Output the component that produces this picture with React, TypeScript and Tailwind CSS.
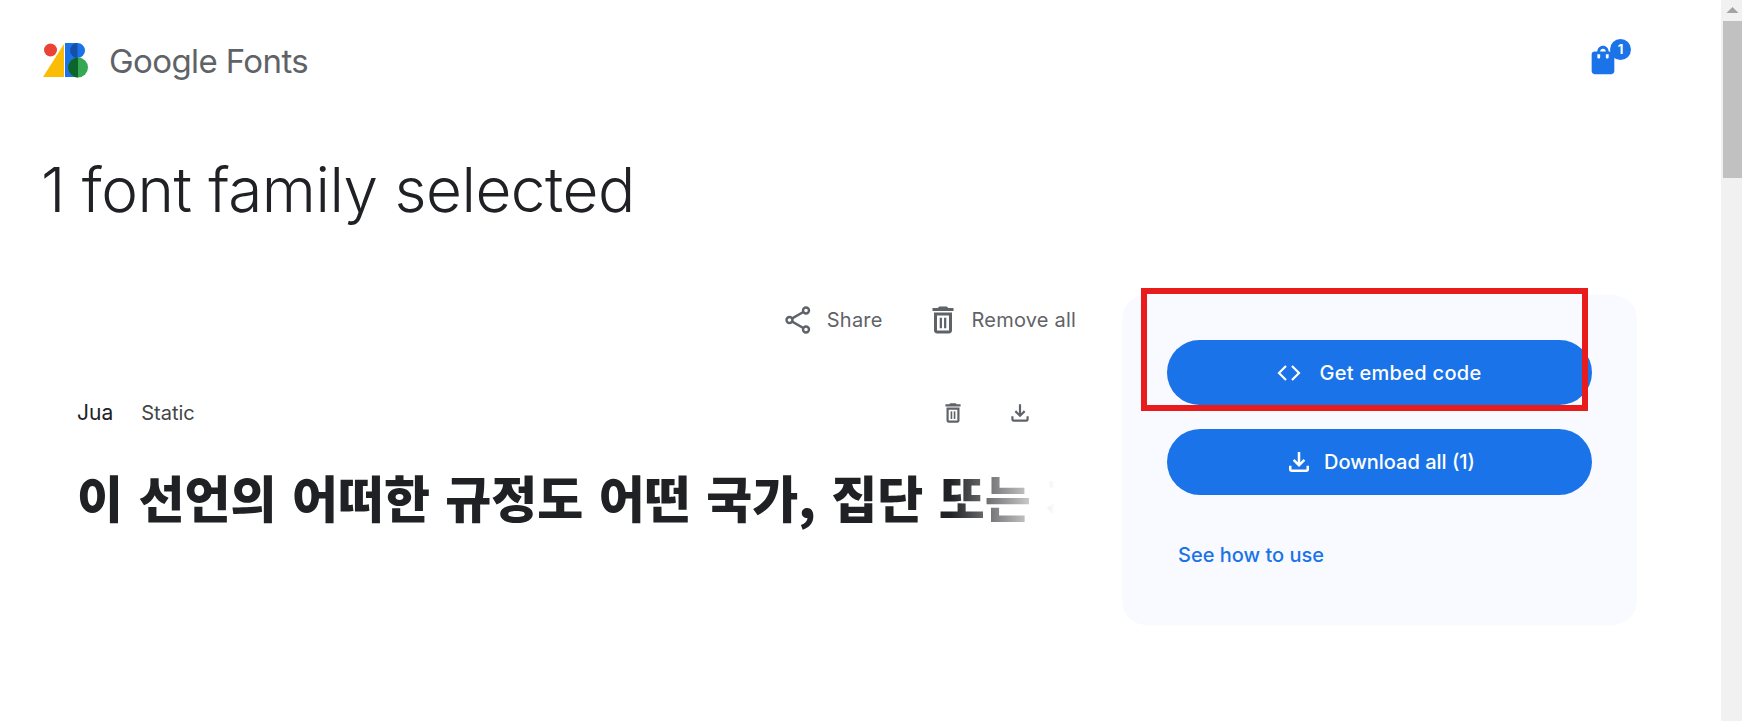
const SANS = "font-['Inter','Noto_Sans',sans-serif]";

function TrashIcon({ className }: { className: string }) {
  return (
    <svg viewBox="0 0 24 24" className={className} fill="currentColor">
      <path d="M6 19c0 1.1.9 2 2 2h8c1.1 0 2-.9 2-2V7H6v12zM8 9h8v10H8V9zm7.5-5l-1-1h-5l-1 1H5v2h14V4z" />
      <rect x="9.8" y="10.5" width="1.5" height="7" />
      <rect x="12.7" y="10.5" width="1.5" height="7" />
    </svg>
  );
}

function DownloadIcon({ className }: { className: string }) {
  return (
    <svg viewBox="0 0 24 24" className={className} fill="currentColor">
      <path d="M12 16l-5-5 1.4-1.45 2.6 2.6V4h2v8.15l2.6-2.6L17 11l-5 5zM6 20c-.55 0-1.02-.2-1.41-.59C4.2 19.02 4 18.55 4 18v-3h2v3h12v-3h2v3c0 .55-.2 1.02-.59 1.41-.39.39-.86.59-1.41.59H6z" />
    </svg>
  );
}

function ShareIcon() {
  return (
    <svg viewBox="0 0 26 30" className="h-[30px] w-[26px] text-[#5f6368]" fill="none" stroke="currentColor" strokeWidth="2.4">
      <circle cx="4.5" cy="15" r="3" />
      <circle cx="21" cy="5.5" r="3" />
      <circle cx="21" cy="24.5" r="3" />
      <path d="M7.2 13.4 18.3 7M7.2 16.6 18.3 23" />
    </svg>
  );
}

function Logo() {
  return (
    <svg viewBox="0 0 46 36" className="h-9 w-[46px]">
      <circle cx="7.5" cy="8" r="6.5" fill="#ea4335" />
      <path d="M0 35 21 2v33z" fill="#fbbc04" />
      <path d="M22 1h12.5a7.5 7.5 0 0 1 0 15H34v19H22z" fill="#1a73e8" />
      <path d="M34.500 1a7.500 7.500 0 0 0 0 15z" fill="#174ea6" />
      <circle cx="35" cy="25.500" r="10" fill="#34a853" />
      <path d="M35 15.500a10 10 0 0 0 0 20z" fill="#0d652d" />
    </svg>
  );
}

export default function App() {
  return (
    <div className={`flex h-[721px] w-full overflow-hidden bg-white ${SANS}`}>
      <main className="relative min-w-0 flex-1">
        <header className="flex items-center justify-between pl-[43px] pr-[101px] pt-[40px]">
          <div className="flex items-center gap-[20px]">
            <Logo />
            <span className="mt-[3px] text-[33px] leading-9 tracking-[-0.6px] text-[#5f6368]">Google Fonts</span>
          </div>
          <div className="relative h-[34px] w-[34px]">
            <svg viewBox="0 0 24 24" className="h-[34px] w-[34px] text-[#1a73e8]" fill="currentColor">
              <path d="M18 6h-2c0-2.210-1.790-4-4-4S8 3.790 8 6H6c-1.100 0-2 .9-2 2v12c0 1.100.9 2 2 2h12c1.100 0 2-.9 2-2V8c0-1.100-.9-2-2-2zm-8 4c0 .55-.45 1-1 1s-1-.45-1-1V8h2v2zm2-6c1.100 0 2 .9 2 2h-4c0-1.100.9-2 2-2zm4 6c0 .55-.45 1-1 1s-1-.45-1-1V8h2v2z" />
            </svg>
            <span className="absolute -top-[4px] left-[24px] flex h-[21px] w-[21px] items-center justify-center rounded-full bg-[#1a73e8] text-[13px] font-bold leading-none text-white">1</span>
          </div>
        </header>

        <h1 className="mt-[71px] pl-[41px] text-[62px] font-light leading-[80px] tracking-[-0.5px] text-[#202124]">1 font family selected</h1>

        <div className="mt-[65px] flex items-start gap-[45px] pl-[77px]">
          <section className="w-[1000px] min-w-0 pt-[7px]">
            <div className="flex items-center justify-end gap-[42px] pr-[1px] text-[20px] tracking-[0.2px] text-[#5f6368]">
              <span className="flex items-center gap-[16px]"><ShareIcon /> Share</span>
              <span className="flex items-center gap-[11px]"><TrashIcon className="h-[36px] w-[36px]" /> Remove all</span>
            </div>
            <div className="mt-[59px] flex items-center justify-between pr-[44px]">
              <div className="flex items-baseline gap-[28px]">
                <span className="text-[21px] text-[#202124]">Jua</span>
                <span className="text-[20px] text-[#444746]">Static</span>
              </div>
              <div className="flex items-center gap-[41px] text-[#5f6368]">
                <TrashIcon className="h-[26px] w-[26px]" />
                <DownloadIcon className="h-[26px] w-[26px]" />
              </div>
            </div>
            <div className="relative mt-[32px] w-[978px] overflow-hidden whitespace-nowrap font-['Noto_Sans_CJK_KR',sans-serif] text-[50px] font-black leading-[70px] [word-spacing:4px] text-[#202124]">
              이 선언의 어떠한 규정도 어떤 국가, 집단 또는 개인이 이 선언에
              <div className="absolute inset-y-0 right-0 w-[105px] bg-gradient-to-r from-white/0 to-white" />
            </div>
          </section>

          <aside className="flex h-[330px] w-[515px] flex-col rounded-[24px] bg-[#f8faff] px-[45px] pt-[45px] text-[20px] font-medium text-white">
            <button className="flex h-[65px] items-center justify-center gap-[18px] rounded-full bg-[#1a73e8] tracking-[0.3px]">
              <svg viewBox="0 0 24 24" className="h-6 w-6" fill="none" stroke="currentColor" strokeWidth="2.2">
                <path d="M9 5l-7 7 7 7M15 5l7 7-7 7" />
              </svg>
              Get embed code
            </button>
            <button className="mt-[24px] flex h-[66px] items-center justify-center gap-[10px] rounded-full bg-[#1a73e8]">
              <DownloadIcon className="h-[30px] w-[30px]" />
              Download all (1)
            </button>
            <a className="mt-[48px] pl-[11px] text-[20px] font-medium leading-6 text-[#1a73e8]">See how to use</a>
          </aside>
        </div>

        <div className="absolute left-[1141px] top-[288px] h-[123px] w-[447px] border-[6px] border-[#e81c1c]" />
      </main>
      <div className="flex w-[21px] shrink-0 flex-col bg-[#f1f1f1] pl-[2px]">
        <svg viewBox="0 0 19 21" className="h-[21px] w-[19px] text-[#a3a3a3]" fill="currentColor">
          <path d="M3.500 13 9.500 7l6 6z" />
        </svg>
        <div className="h-[157px] bg-[#c1c1c1]" />
      </div>
    </div>
  );
}
